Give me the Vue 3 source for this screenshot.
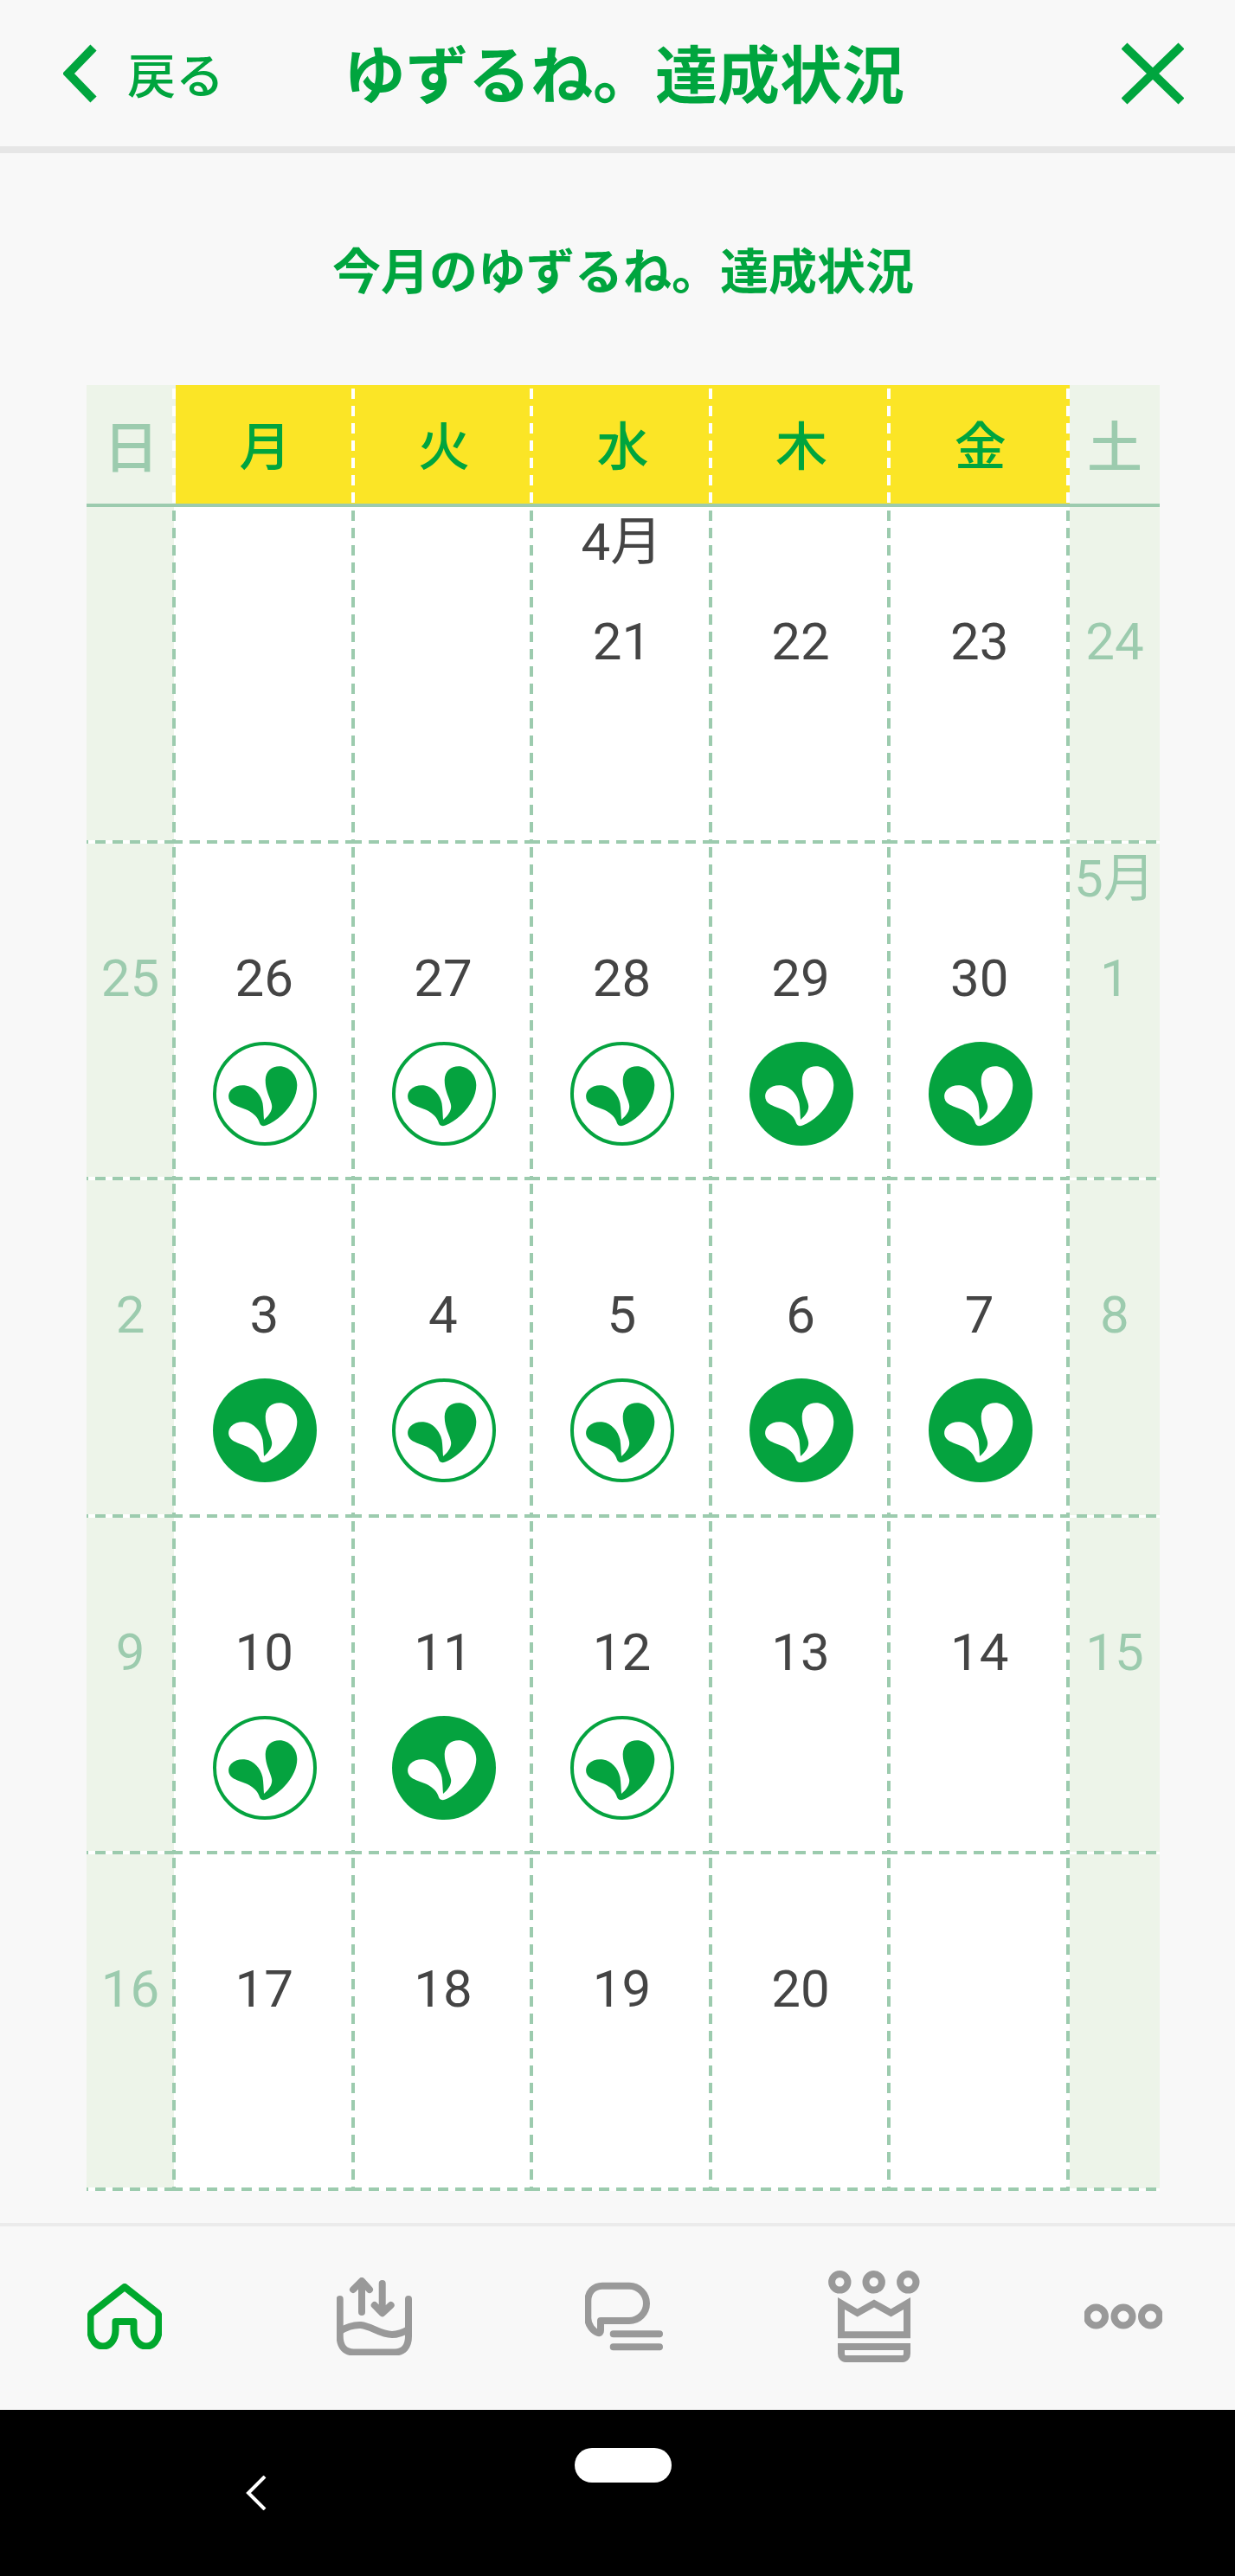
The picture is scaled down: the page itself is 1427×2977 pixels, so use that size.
<template>
  <div class="app">
    <header class="top-bar">
      <div class="back">
        <svg class="back-icon" width="40" height="68" viewBox="0 0 40 68">
          <path d="M35 4 L6 34 L35 64" />
        </svg>
        <span class="back-text">戻る</span>
      </div>
      <h1 class="top-title">ゆずるね。達成状況</h1>
      <svg class="close-icon" width="72" height="72" viewBox="0 0 72 72">
        <path d="M3 4 L69 68 M69 4 L3 68" />
      </svg>
    </header>

    <main class="main">
      <h2 class="sub-title">今月のゆずるね。達成状況</h2>

      <div class="calendar">
        <div
          v-for="(day, i) in weekdays"
          :key="day"
          class="head-cell"
          :class="colClass(i)"
        >{{ day }}</div>

        <div
          v-for="(cell, i) in cells"
          :key="i"
          class="cell"
          :class="colClass(i % 7)"
        >
          <div class="month">{{ cell.month }}</div>
          <div class="date">{{ cell.d }}</div>
          <svg v-if="cell.mark" class="mark" width="120" height="120" viewBox="0 0 120 120">
            <circle
              cx="60"
              cy="60"
              :r="cell.mark === 'fill' ? 60 : 58"
              :fill="cell.mark === 'fill' ? '#05a33f' : '#fff'"
              stroke="#05a33f"
              :stroke-width="cell.mark === 'fill' ? 0 : 4"
            />
            <path :fill="cell.mark === 'fill' ? '#fff' : '#05a33f'" :d="leaf" />
          </svg>
        </div>
      </div>
    </main>

    <nav class="tabs">
      <div class="tab">
        <svg class="tab-home" width="86" height="76" viewBox="0 0 86 76">
          <path d="M43 4 L5 34 Q3.5 36 3.5 38 V54 C3.5 65 10 72.5 18 72.5 C26 72.5 32.5 65 32.5 54 V44 H53.5 V54 C53.5 65 60 72.5 68 72.5 C76 72.5 82.5 65 82.5 54 V38 Q82.5 36 81 34 Z" />
        </svg>
      </div>
      <div class="tab">
        <svg class="tab-gray" width="87" height="90" viewBox="0 0 87 90">
          <path d="M3.7 25 V68 C3.7 80 10 86.5 20 86.5 H67 C77 86.5 83 80 83 68 V25" />
          <path d="M3.7 62 C12 57 20 54.5 28 55 C40 56 50 66 64 66 C72 66 78 63 83 60" />
          <path d="M29 40 V5 M19 14 L29 4 L38 14" />
          <path d="M52.7 7 V41 M43.7 32 L52.7 41.3 L62.7 32" />
        </svg>
      </div>
      <div class="tab">
        <svg class="tab-gray" width="90" height="80" viewBox="0 0 90 80">
          <path d="M18 45 H51 C62 45 71 36 71 25 C71 14 62 4.7 51 4.7 H20 C10 4.7 3.3 12 3.3 22 V42 C3.3 50 9 57 15 59 Q18 60 18 56 Z" />
          <path d="M32.7 60.3 H86 M32.7 75.3 H86" />
        </svg>
      </div>
      <div class="tab">
        <svg class="tab-crown" width="106" height="106" viewBox="0 0 106 106">
          <circle cx="13.3" cy="13.3" r="9.2" />
          <circle cx="52.7" cy="13.3" r="9.2" />
          <circle cx="92.3" cy="13.3" r="9.2" />
          <path d="M15 38 L33.7 49 L53 38 L72.5 49 L91 38 V74.3 H15 Z" />
          <path d="M15 88 H91 V96 C91 99 89 102 86 102 H20 C17 102 15 99 15 96 Z" />
        </svg>
      </div>
      <div class="tab">
        <svg class="tab-crown" width="90" height="30" viewBox="0 0 90 30">
          <circle cx="13.5" cy="15" r="10.5" />
          <circle cx="45" cy="15" r="10.5" />
          <circle cx="76.5" cy="15" r="10.5" />
        </svg>
      </div>
    </nav>

    <div class="system-nav">
      <svg class="sys-back" width="24" height="40" viewBox="0 0 24 40">
        <path d="M22 1 L3 20 L22 39" />
      </svg>
      <div class="sys-home"></div>
    </div>
  </div>
</template>

<script setup>
const weekdays = ["日", "月", "火", "水", "木", "金", "土"];

const leaf =
  "M59 90 C66 84 69 78 68 73 C67 66 60.5 57 60.7 44 C61 34 68 28.3 77 28.3 C88 28.3 97.3 38 97.3 50 C97.3 70 78 90 61.5 96.5 C58 98 55 97 54 94 C52 87 47 83 42 80 C36 76.5 27 75 22 71 C17 67 17 60 21 55.5 C25 51 32 49.5 38 50.5 C47 52 55 60 57.5 71 C58.5 77 58.5 84 59 90 Z";

const cells = [
  {}, {}, {}, { d: 21, month: "4月" }, { d: 22 }, { d: 23 }, { d: 24 },
  { d: 25 }, { d: 26, mark: "line" }, { d: 27, mark: "line" }, { d: 28, mark: "line" }, { d: 29, mark: "fill" }, { d: 30, mark: "fill" }, { d: 1, month: "5月" },
  { d: 2 }, { d: 3, mark: "fill" }, { d: 4, mark: "line" }, { d: 5, mark: "line" }, { d: 6, mark: "fill" }, { d: 7, mark: "fill" }, { d: 8 },
  { d: 9 }, { d: 10, mark: "line" }, { d: 11, mark: "fill" }, { d: 12, mark: "line" }, { d: 13 }, { d: 14 }, { d: 15 },
  { d: 16 }, { d: 17 }, { d: 18 }, { d: 19 }, { d: 20 }, {}, {},
];

function colClass(col) {
  if (col === 0) return "sun";
  if (col === 6) return "sat";
  return "week";
}
</script>

<style>
html,
body {
  margin: 0;
  background: #f8f8f8;
}
</style>

<style scoped>
.app {
  min-height: 100vh;
  display: flex;
  flex-direction: column;
  background: #f8f8f8;
  font-family: Roboto, "Noto Sans CJK JP", sans-serif;
}

/* top bar */
.top-bar {
  height: 169px;
  box-sizing: content-box;
  padding: 0 59px 0 73px;
  display: flex;
  align-items: center;
  border-bottom: 8px solid #e6e6e6;
  color: #00a53e;
}
.back {
  display: flex;
  align-items: center;
  gap: 34px;
}
.back-icon path {
  fill: none;
  stroke: #00a53e;
  stroke-width: 10;
}
.back-text {
  font-size: 56px;
  font-weight: 500;
  line-height: 1;
  padding-top: 8px;
}
.top-title {
  margin: 0 0 0 138px;
  padding-top: 8px;
  font-size: 72px;
  font-weight: 700;
  line-height: 1;
  white-space: nowrap;
}
.close-icon {
  margin-left: auto;
}
.close-icon path {
  fill: none;
  stroke: #00a53e;
  stroke-width: 10;
}

/* calendar */
.main {
  flex: 1;
  padding: 98px 87px 37px 100px;
}
.sub-title {
  margin: 0 0 90px;
  height: 80px;
  line-height: 80px;
  font-size: 56px;
  font-weight: 700;
  text-align: center;
  color: #00a53e;
  white-space: nowrap;
}
.calendar {
  display: grid;
  grid-template-columns: 103px repeat(5, 206.6px) 104px;
  grid-template-rows: 141px repeat(5, 389.2px);
}
.head-cell {
  display: flex;
  align-items: center;
  justify-content: center;
  padding-bottom: 4px;
  font-size: 60px;
  font-weight: 500;
  color: #00a53e;
  background-color: #fbe526;
  border-bottom: 4px solid #9ccbae;
  background-image: repeating-linear-gradient(to bottom, transparent 0 4px, #fff 4px 16px, transparent 16px 20px);
  background-size: 4px 100%;
  background-position: right top;
  background-repeat: no-repeat;
}
.head-cell.sun,
.head-cell.sat {
  font-size: 64px;
  color: #9ccbae;
  background-color: #edf4e9;
}
.head-cell.sat {
  background-image: none;
}
.cell {
  display: flex;
  flex-direction: column;
  align-items: center;
  padding-right: 2px;
  color: #444;
  background-color: #fff;
  background-repeat: no-repeat;
  background-position: right top, left bottom;
  background-size: 4px 100%, 100% 4px;
  background-image:
    repeating-linear-gradient(to bottom, transparent 0 4px, #9ccbae 4px 16px, transparent 16px 20px),
    repeating-linear-gradient(to right, #9ccbae 0 8px, transparent 8px 16px, #9ccbae 16px 20px);
}
.cell.sun {
  color: #9ccbae;
  background-position: right top, left bottom, left top;
  background-size: 4px 100%, 100% 4px, 101px calc(100% - 4px);
  background-image:
    repeating-linear-gradient(to bottom, transparent 0 4px, #9ccbae 4px 16px, transparent 16px 20px),
    repeating-linear-gradient(to right, #9ccbae 0 2px, transparent 2px 10px, #9ccbae 10px 20px),
    linear-gradient(#edf4e9, #edf4e9);
}
.cell.sat {
  color: #9ccbae;
  padding-right: 0;
  background-position: left bottom, left top;
  background-size: 100% 4px, 100% calc(100% - 3px);
  background-image:
    repeating-linear-gradient(to right, transparent 0 8px, #9ccbae 8px 20px),
    linear-gradient(#edf4e9, #edf4e9);
}
.month {
  height: 82px;
  line-height: 82px;
  font-size: 60px;
  white-space: nowrap;
}
.date {
  height: 147px;
  line-height: 147px;
  font-size: 60px;
}
.mark {
  display: block;
  margin-right: -2px;
}

/* tab bar */
.tabs {
  height: 208px;
  padding: 0 84px 4px 99px;
  display: flex;
  align-items: center;
  justify-content: space-between;
  border-top: 4px solid #ebebeb;
}
.tab {
  width: 90px;
  display: flex;
  justify-content: center;
}
.tab svg {
  flex-shrink: 0;
  display: block;
}
.tab-home path {
  fill: none;
  stroke: #00a82d;
  stroke-width: 8;
  stroke-linejoin: round;
}
.tab-gray path {
  fill: none;
  stroke: #999;
  stroke-width: 8;
  stroke-linecap: round;
  stroke-linejoin: round;
}
.tab-crown circle,
.tab-crown path {
  fill: none;
  stroke: #999;
  stroke-width: 8;
}

/* android nav */
.system-nav {
  height: 192px;
  padding-left: 284px;
  display: flex;
  align-items: flex-start;
  background: #000;
}
.sys-back {
  margin-top: 76px;
}
.sys-back path {
  fill: none;
  stroke: #fff;
  stroke-width: 4;
}
.sys-home {
  width: 112px;
  height: 40px;
  margin: 44px 0 0 356px;
  border-radius: 20px;
  background: #fff;
}
</style>
